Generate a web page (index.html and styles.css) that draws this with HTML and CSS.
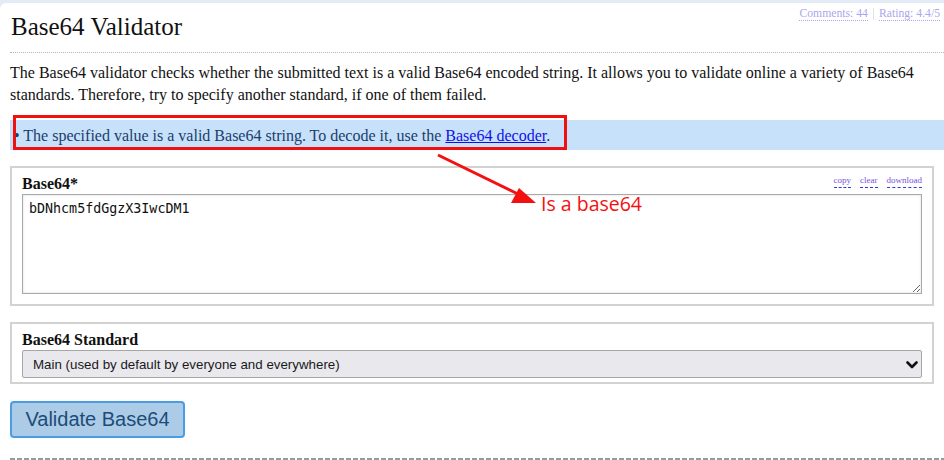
FILE: index.html
```html
<!DOCTYPE html>
<html>
<head>
<meta charset="utf-8">
<link rel="stylesheet" href="styles.css">
</head>
<body>
<div class="page">
  <div class="content">
    <header class="head">
      <h1 class="title">Base64 Validator</h1>
      <div class="meta"><a class="meta-link">Comments: 44</a><span class="sep"></span><a class="meta-link">Rating: 4.4/5</a></div>
    </header>
    <p class="intro">The Base64 validator checks whether the submitted text is a valid Base64 encoded string. It allows you to validate online a variety of Base64 standards. Therefore, try to specify another standard, if one of them failed.</p>
    <div class="info">• The specified value is a valid Base64 string. To decode it, use the <a class="link">Base64 decoder</a>.</div>
    <div class="field field-text">
      <div class="field-head">
        <label class="label">Base64*</label>
        <div class="tools"><a class="tool">copy</a><a class="tool">clear</a><a class="tool">download</a></div>
      </div>
      <textarea class="input-area">bDNhcm5fdGgzX3IwcDM1</textarea>
    </div>
    <div class="field field-select">
      <div class="field-head">
        <label class="label">Base64 Standard</label>
      </div>
      <div class="select-wrap">
        <select class="select"><option>Main (used by default by everyone and everywhere)</option></select>
        <svg class="chev" width="12" height="8" viewBox="0 0 12 8"><path d="M1.5 1.5 L6 6 L10.5 1.5" fill="none" stroke="#111" stroke-width="2.6" stroke-linecap="round" stroke-linejoin="round"/></svg>
      </div>
    </div>
    <button class="btn">Validate Base64</button>
    <div class="dashes"></div>
  </div>
  <div class="note-box"></div>
  <svg class="note-arrow" width="944" height="460" viewBox="0 0 944 460">
    <line x1="438" y1="155" x2="520" y2="195" stroke="#f41010" stroke-width="3"/>
    <polygon points="536,203 511,203 519,188" fill="#f41010"/>
  </svg>
  <div class="note-text">Is a base64</div>
</div>
</body>
</html>
```
FILE: styles.css
```css
html, body {
  margin: 0;
  padding: 0;
}
body {
  background: #e3ebf7;
  font-family: "Liberation Serif", "Times New Roman", serif;
  font-size: 16px;
  color: #111;
  width: 944px;
  height: 460px;
  overflow: hidden;
}
.page {
  position: relative;
  margin-top: 3px;
  background: #fff;
  border-top-left-radius: 6px;
  height: 457px;
}
.content {
  padding-left: 10px;
}
.head {
  display: flex;
  justify-content: space-between;
  align-items: flex-start;
  border-bottom: 1px dotted #b8b8b8;
  height: 49px;
}
.title {
  margin: 9px 0 0 1px;
  font-weight: normal;
  font-size: 25px;
  line-height: 30px;
}
.meta {
  display: flex;
  align-items: center;
  font-size: 11.7px;
  line-height: 13px;
  padding-top: 4px;
  padding-right: 4px;
}
.meta-link {
  color: #aba6ee;
  border-bottom: 1px dotted #aba6ee;
}
.sep {
  width: 1px;
  height: 12px;
  background: #e2e2ec;
  margin: 0 5px;
}
.intro {
  margin: 9px 0 0 0;
  line-height: 22px;
}
.info {
  margin-top: 14px;
  background: #c7e1fb;
  height: 30px;
  line-height: 31px;
  padding-left: 4px;
  color: #1b3d6b;
}
.link {
  color: #1010e6;
  text-decoration: underline;
}
.field {
  width: 900px;
  border: 2px solid #d2d2d2;
  padding: 0 10px 10px 10px;
}
.field-text {
  margin-top: 16px;
}
.field-select {
  margin-top: 16px;
  padding-bottom: 4px;
}
.field-head {
  display: flex;
  justify-content: space-between;
  align-items: flex-start;
  padding-top: 6px;
  height: 20px;
}
.label {
  font-weight: bold;
  line-height: 20px;
}
.tools {
  display: flex;
  gap: 9px;
  font-size: 9px;
  line-height: 11px;
  padding-top: 1px;
}
.tool {
  color: #7755dd;
  border-bottom: 1px dashed #2c3cd8;
  padding-bottom: 1px;
}
.input-area {
  display: block;
  box-sizing: border-box;
  width: 900px;
  height: 100px;
  margin: 0;
  border: 1px solid #a9a9a9;
  box-shadow: inset 0 0 3px #ddd;
  padding: 5px 6px;
  font-family: "DejaVu Sans Mono", monospace;
  font-size: 13.33px;
  line-height: 17px;
  color: #111;
  resize: both;
}
.select-wrap {
  position: relative;
}
.select {
  display: block;
  appearance: none;
  -webkit-appearance: none;
  box-sizing: border-box;
  width: 900px;
  height: 28px;
  margin: 0;
  border: 1px solid #a6a6a6;
  border-radius: 2px;
  background: #e9e9ed;
  padding: 0 10px;
  font-family: "Liberation Sans", Arial, sans-serif;
  font-size: 13.33px;
  color: #1a1a1a;
}
.chev {
  position: absolute;
  right: 4px;
  top: 11px;
}
.btn {
  display: block;
  margin-top: 17px;
  width: 175px;
  height: 37px;
  box-sizing: border-box;
  border: 2px solid #4a9de2;
  border-radius: 4px;
  background: #abcbe7;
  color: #1e4b78;
  font-family: "Liberation Sans", Arial, sans-serif;
  font-size: 20px;
  padding: 0;
}
.dashes {
  margin-top: 20px;
  height: 2px;
  background: repeating-linear-gradient(to right, #9a9a9a 0 5px, transparent 5px 7px);
}
.note-box {
  position: absolute;
  left: 13px;
  top: 112px;
  width: 554px;
  height: 35px;
  box-sizing: border-box;
  border: 3px solid #f01010;
}
.note-arrow {
  position: absolute;
  left: 0;
  top: -3px;
}
.note-text {
  position: absolute;
  left: 541px;
  top: 189px;
  font-family: "Open Sans", sans-serif;
  font-size: 19.5px;
  line-height: 24px;
  color: #f41010;
}
```
